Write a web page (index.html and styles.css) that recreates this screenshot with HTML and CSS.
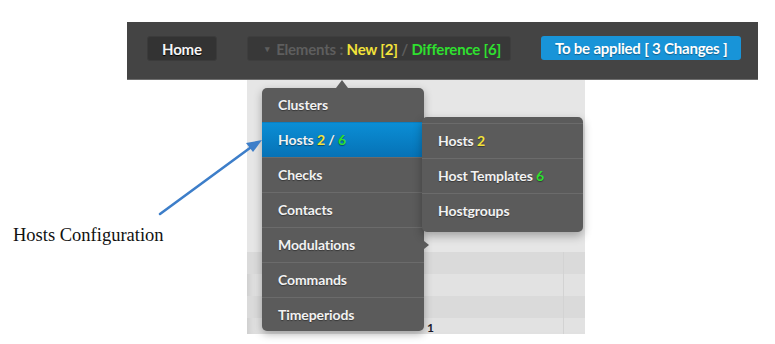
FILE: index.html
```html
<!DOCTYPE html>
<html lang="en">
<head>
  <meta charset="UTF-8" />
  <title>Elements menu</title>
  <link rel="stylesheet" href="styles.css">
</head>
<body>
  <div class="screen">

    <div class="topbar">
      <a class="btn btn-home">Home</a>
      <div class="btn btn-elements">
        <span class="caret">&#9662;</span> Elements : <span class="new">New [2]</span> / <span class="diff">Difference [6]</span>
      </div>
      <a class="btn btn-apply">To be applied [ 3 Changes ]</a>
    </div>

    <div class="panel">
      <div class="panel-top"></div>
      <div class="row dark"><div></div><div></div></div>
      <div class="row"><div></div><div></div></div>
      <div class="row dark"><div></div><div></div></div>
      <div class="row"><div class="cell-text">1</div><div></div></div>
    </div>

    <ul class="menu">
      <li>Clusters</li>
      <li class="active">Hosts <span class="new">2</span> / <span class="diff">6</span></li>
      <li>Checks</li>
      <li>Contacts</li>
      <li class="has-sub">Modulations</li>
      <li>Commands</li>
      <li>Timeperiods</li>
    </ul>

    <ul class="menu submenu">
      <li>Hosts <span class="new">2</span></li>
      <li>Host Templates <span class="diff">6</span></li>
      <li>Hostgroups</li>
    </ul>

    <svg class="pointer" width="120" height="90" viewBox="0 0 120 90">
      <line x1="2" y1="82" x2="96" y2="13" stroke="#3d7ec9" stroke-width="2.6" stroke-linecap="round" />
      <path d="M104 8 L88 11 L95 20 Z" fill="#3d7ec9" />
    </svg>

    <p class="note">Hosts Configuration</p>

  </div>
</body>
</html>
```

FILE: styles.css
```css
:root {
  --bar: #444444;
  --menu: #5b5b5b;
  --menu-line: #6b6b6b;
  --menu-text: #f2f2f2;
  --yellow: #f2e23a;
  --green: #2fe02f;
  --blue: #1894d8;
}

* {
  box-sizing: border-box;
  margin: 0;
  padding: 0;
}

body {
  background: #fff;
  font-family: 'Lato', 'Open Sans', sans-serif;
}

.screen {
  position: relative;
  width: 775px;
  height: 344px;
  overflow: hidden;
}

/* top bar */

.topbar {
  margin: 22px 0 0 127px;
  width: 631px;
  height: 58px;
  background: var(--bar);
  border-bottom: 1px solid #6e6e6e;
  display: flex;
  align-items: flex-start;
  gap: 30px;
  padding: 14px 17px 0 20px;
}

.btn {
  display: flex;
  align-items: center;
  justify-content: center;
  height: 25px;
  border-radius: 3px;
  font-size: 15px;
  font-weight: 700;
  letter-spacing: -0.2px;
  white-space: pre;
}

.btn-home {
  width: 70px;
  background: #333333;
  border: 1px solid #3b3b3b;
  color: #f5f5f5;
  text-shadow: 0 1px 1px #000;
}

.btn-elements {
  width: 265px;
  background: #383838;
  border: 1px solid #3e3e3e;
  color: #5e5e5e;
  justify-content: flex-start;
  padding-left: 17px;
}

.btn-elements .caret {
  font-size: 9px;
  margin-right: 3px;
}

.new {
  color: var(--yellow);
}

.diff {
  color: var(--green);
}

.btn-apply {
  width: 200px;
  height: 24px;
  background: var(--blue);
  color: #fff;
  text-shadow: 0 1px 1px rgba(0, 0, 0, 0.35);
}

/* background table */

.panel {
  margin-left: 247px;
  width: 338px;
  height: 254px;
  background: #e2e2e2;
  box-shadow: inset 8px 0 8px -6px rgba(0, 0, 0, 0.12);
  overflow: hidden;
}

.panel-top {
  height: 172px;
  background: #e6e6e6;
}

.row {
  display: grid;
  grid-template-columns: 316px 1fr;
  height: 22px;
}

.row > div + div {
  border-left: 1px solid #d3d3d3;
}

.row.dark {
  height: 22px;
  background: #dadada;
}

.cell-text {
  padding: 4px 0 0 180px;
  font-size: 12px;
  line-height: 1;
  font-weight: 700;
  color: #1c1c2c;
}

/* dropdown menus */

.menu {
  position: absolute;
  left: 262px;
  top: 88px;
  width: 162px;
  list-style: none;
  background: var(--menu);
  border-radius: 5px;
  box-shadow: 0 3px 8px rgba(0, 0, 0, 0.3);
}

.menu::before {
  content: '';
  position: absolute;
  left: 74px;
  top: -8px;
  border-left: 6px solid transparent;
  border-right: 6px solid transparent;
  border-bottom: 8px solid var(--menu);
}

.menu li {
  height: 35px;
  line-height: 34px;
  padding-left: 16px;
  border-top: 1px solid var(--menu-line);
  color: var(--menu-text);
  font-size: 14px;
  font-weight: 700;
  letter-spacing: -0.1px;
  text-shadow: 0 1px 1px rgba(0, 0, 0, 0.4);
  position: relative;
}

.menu li:first-child {
  border-top: none;
  height: 34px;
}

.menu li:last-child {
  height: 34px;
}

.menu li.active {
  background: linear-gradient(#0b8ed5, #0672b6);
  border-top-color: #0a7fc2;
}

.menu li.has-sub::after {
  content: '';
  position: absolute;
  right: -5px;
  top: 13px;
  border-top: 4px solid transparent;
  border-bottom: 4px solid transparent;
  border-left: 5px solid var(--menu);
}

.submenu {
  left: 422px;
  top: 117px;
  width: 161px;
  padding: 6px 0 4px;
  box-shadow: 0 4px 10px rgba(0, 0, 0, 0.3);
}

.submenu::before {
  display: none;
}

.submenu li,
.submenu li:first-child,
.submenu li:last-child {
  height: 35px;
  border-top: 1px solid var(--menu-line);
}

/* annotation */

.pointer {
  position: absolute;
  left: 158px;
  top: 132px;
}

.note {
  position: absolute;
  left: 13px;
  top: 226px;
  font-family: 'Liberation Serif', 'Times New Roman', serif;
  font-size: 18.5px;
  line-height: 1;
  color: #111;
}
```
